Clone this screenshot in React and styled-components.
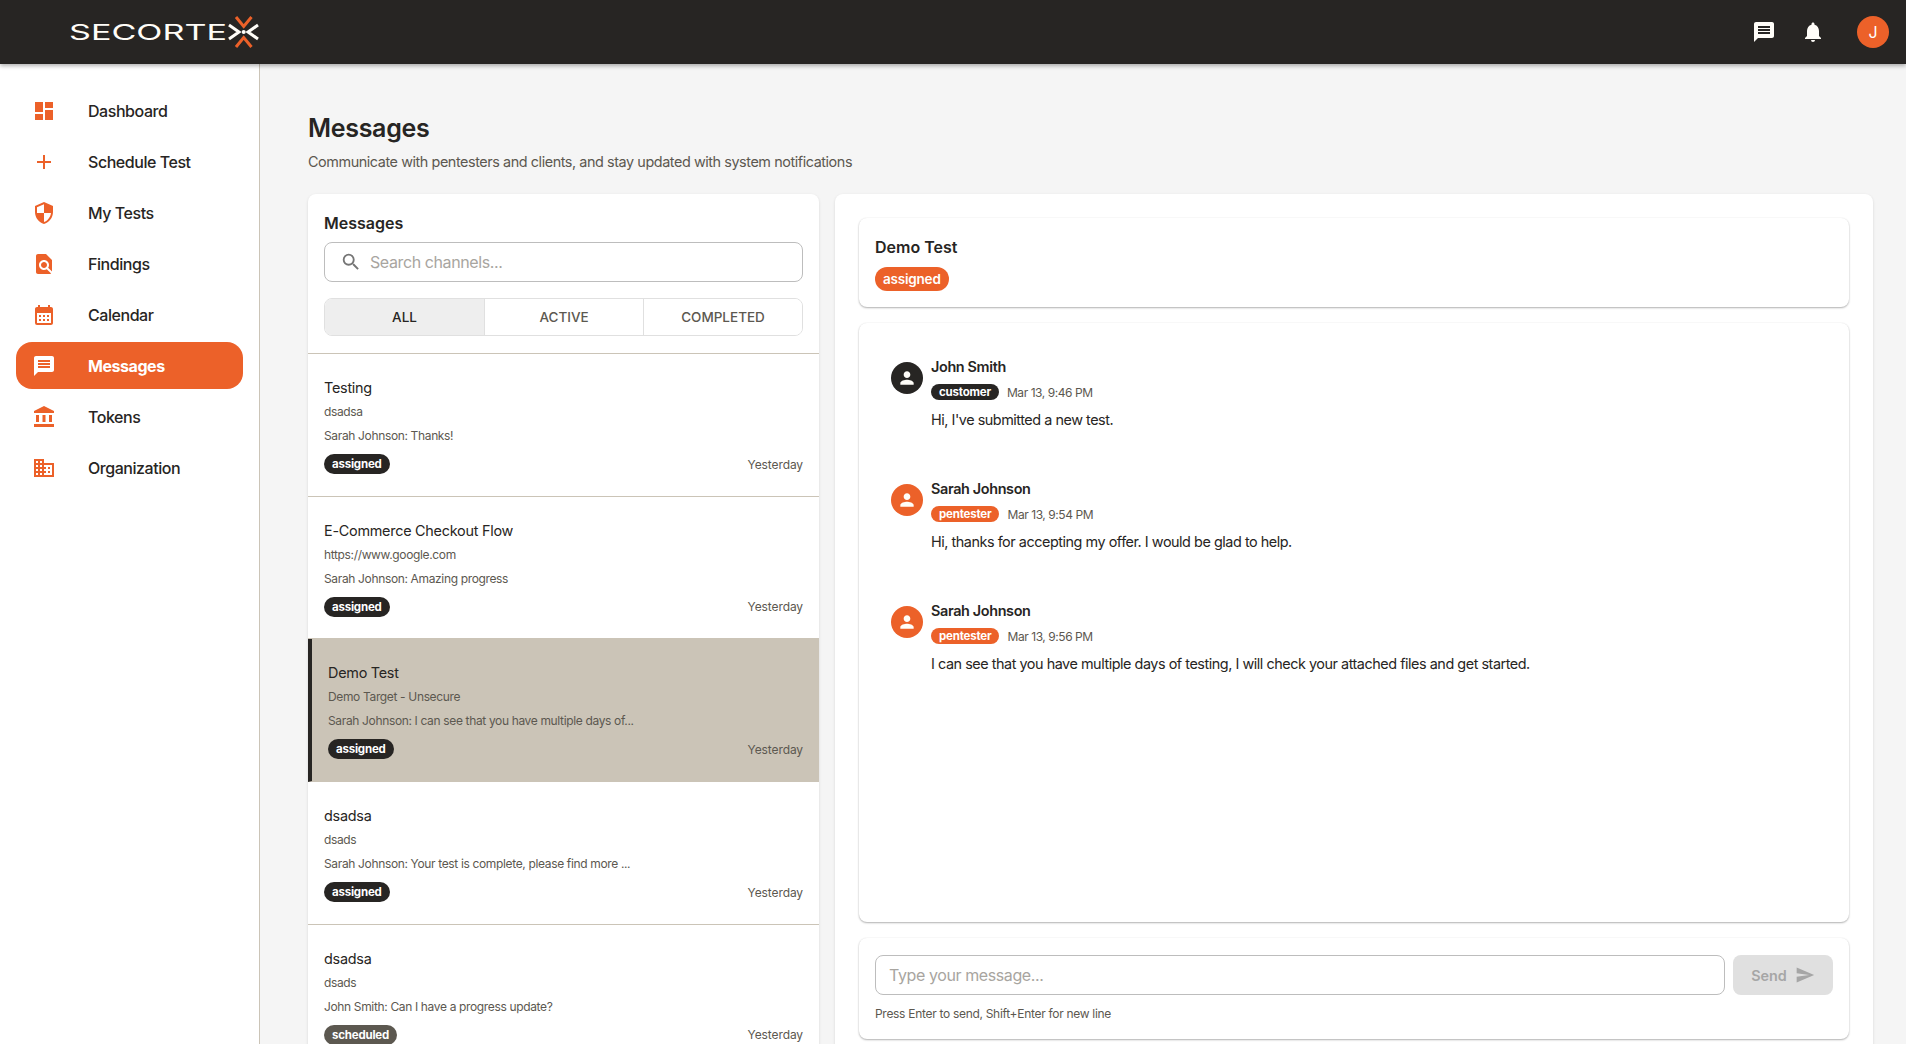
import React from "react";
import styled, { createGlobalStyle } from "styled-components";
import {
  MdDashboard,
  MdAdd,
  MdSecurity,
  MdFindInPage,
  MdCalendarMonth,
  MdMessage,
  MdAccountBalance,
  MdDomain,
  MdNotifications,
  MdPerson,
  MdSearch,
  MdSend,
} from "react-icons/md";

const ORANGE = "#ec6129";
const DARK = "#272523";

const GlobalStyle = createGlobalStyle`
  html, body {
    margin: 0;
    height: 100%;
    overflow: hidden;
    background: #f5f5f5;
    font-family: "Inter", "Liberation Sans", sans-serif;
    color: ${DARK};
  }
  * { box-sizing: border-box; }
`;

const navItems = [
  { label: "Dashboard", icon: MdDashboard },
  { label: "Schedule Test", icon: MdAdd },
  { label: "My Tests", icon: MdSecurity },
  { label: "Findings", icon: MdFindInPage },
  { label: "Calendar", icon: MdCalendarMonth },
  { label: "Messages", icon: MdMessage, active: true },
  { label: "Tokens", icon: MdAccountBalance },
  { label: "Organization", icon: MdDomain },
];

const channels = [
  { title: "Testing", target: "dsadsa", preview: "Sarah Johnson: Thanks!", status: "assigned" },
  { title: "E-Commerce Checkout Flow", target: "https://www.google.com", preview: "Sarah Johnson: Amazing progress", status: "assigned" },
  { title: "Demo Test", target: "Demo Target - Unsecure", preview: "Sarah Johnson: I can see that you have multiple days of...", status: "assigned", selected: true },
  { title: "dsadsa", target: "dsads", preview: "Sarah Johnson: Your test is complete, please find more ...", status: "assigned" },
  { title: "dsadsa", target: "dsads", preview: "John Smith: Can I have a progress update?", status: "scheduled" },
];

const thread = [
  { name: "John Smith", role: "customer", date: "Mar 13, 9:46 PM", text: "Hi, I've submitted a new test." },
  { name: "Sarah Johnson", role: "pentester", date: "Mar 13, 9:54 PM", text: "Hi, thanks for accepting my offer. I would be glad to help." },
  { name: "Sarah Johnson", role: "pentester", date: "Mar 13, 9:56 PM", text: "I can see that you have multiple days of testing, I will check your attached files and get started." },
];

const Page = styled.div`
  height: 100vh;
  display: flex;
  flex-direction: column;
  overflow: hidden;
`;

const TopBar = styled.header`
  height: 64px;
  flex: none;
  background: ${DARK};
  display: flex;
  align-items: center;
  justify-content: space-between;
  padding: 0 17px 0 68px;
  box-shadow: 0 2px 4px rgba(0, 0, 0, 0.3);
  position: relative;
  z-index: 2;
`;

const TopActions = styled.div`
  display: flex;
  align-items: center;
`;

const TopIcon = styled.div`
  width: 24px;
  height: 24px;
  margin-right: 25px;
  color: #fffdf8;
  font-size: 24px;
  display: flex;
`;

const UserBadge = styled.div`
  width: 32px;
  height: 32px;
  margin-left: 7px;
  border-radius: 50%;
  background: ${ORANGE};
  color: #fff;
  font-size: 16px;
  display: flex;
  align-items: center;
  justify-content: center;
`;

const Body = styled.div`
  flex: 1;
  display: flex;
  min-height: 0;
`;

const SideBar = styled.nav`
  width: 260px;
  flex: none;
  background: #fff;
  border-right: 1px solid #cbc4b7;
  padding: 23px 16px 0;
  display: flex;
  flex-direction: column;
  gap: 4px;
`;

const NavItem = styled.div`
  height: 47px;
  display: flex;
  align-items: center;
  padding-left: 16px;
  border-radius: 16px;
  font-size: 16px;
  letter-spacing: -0.45px;
  font-weight: ${(p) => (p.$active ? 700 : 500)};
  background: ${(p) => (p.$active ? ORANGE : "transparent")};
  color: ${(p) => (p.$active ? "#fff" : DARK)};
  svg {
    flex: none;
    margin-right: 32px;
    font-size: 24px;
    color: ${(p) => (p.$active ? "#fff" : ORANGE)};
  }
`;

const Main = styled.main`
  flex: 1;
  min-width: 0;
  padding: 48px 33px 0 48px;
`;

const PageTitle = styled.h1`
  margin: 0;
  font-size: 25px;
  line-height: 32px;
  font-weight: 600;
  letter-spacing: -0.3px;
`;

const PageSub = styled.p`
  margin: 7px 0 0;
  font-size: 14.4px;
  line-height: 22px;
  letter-spacing: -0.43px;
  color: #5c5850;
`;

const Columns = styled.div`
  margin-top: 21px;
  display: flex;
  gap: 16px;
  height: 869px;
`;

const Card = styled.section`
  background: #fff;
  border-radius: 8px;
  box-shadow: 0 1px 3px rgba(0, 0, 0, 0.12);
  overflow: hidden;
`;

const ListCard = styled(Card)`
  width: 511px;
  flex: none;
`;

const ListHead = styled.div`
  padding: 17px 16px 17px;
  border-bottom: 1px solid #cbc4b7;
`;

const ListTitle = styled.h2`
  margin: 0 0 6px;
  font-size: 16px;
  line-height: 25px;
  font-weight: 600;
  letter-spacing: 0;
`;

const SearchBox = styled.div`
  height: 40px;
  border: 1px solid #bdbdbd;
  border-radius: 8px;
  display: flex;
  align-items: center;
  padding: 0 15px;
  gap: 8px;
  font-size: 16px;
  letter-spacing: -0.4px;
  color: #a8a5a0;
  svg {
    font-size: 22px;
    color: #757575;
  }
`;

const Tabs = styled.div`
  margin-top: 16px;
  height: 38px;
  display: grid;
  grid-template-columns: repeat(3, 1fr);
  border: 1px solid #e0e0e0;
  border-radius: 8px;
  overflow: hidden;
`;

const Tab = styled.div`
  display: flex;
  align-items: center;
  justify-content: center;
  font-size: 13.5px;
  font-weight: 500;
  color: ${(p) => (p.$active ? DARK : "#5c5850")};
  background: ${(p) => (p.$active ? "#eeeeee" : "#fff")};
  & + & {
    border-left: 1px solid #e0e0e0;
  }
`;

const Channel = styled.div`
  height: 142.7px;
  padding: 23px 16px 0;
  background: ${(p) => (p.$selected ? "#cbc4b7" : "#fff")};
  border-bottom: 1px solid #cbc4b7;
  border-left: ${(p) => (p.$selected ? `4px solid ${DARK}` : "none")};
`;

const ChannelTitle = styled.div`
  font-size: 14.4px;
  line-height: 22px;
  letter-spacing: -0.25px;
`;

const ChannelSub = styled.div`
  margin-top: 2px;
  font-size: 12px;
  line-height: 21px;
  letter-spacing: -0.35px;
  color: #5c5850;
`;

const ChannelPreview = styled(ChannelSub)`
  margin-top: 3px;
`;

const ChannelFoot = styled.div`
  margin-top: 8px;
  display: flex;
  align-items: center;
  justify-content: space-between;
`;

const Chip = styled.span`
  display: inline-flex;
  align-items: center;
  height: ${(p) => (p.$small ? "16px" : "20px")};
  padding: 0 8px;
  border-radius: 10px;
  font-size: 11.5px;
  font-weight: 700;
  letter-spacing: -0.2px;
  color: #fff;
  background: ${(p) => p.$bg};
`;

const Stamp = styled.span`
  font-size: 12px;
  letter-spacing: -0.1px;
  color: #5c5850;
`;

const DateStamp = styled(Stamp)`
  letter-spacing: -0.44px;
`;

const ChatCard = styled(Card)`
  flex: 1;
  min-width: 0;
  padding: 24px;
  display: flex;
  flex-direction: column;
  gap: 16px;
`;

const InnerCard = styled.div`
  background: #fff;
  border-radius: 8px;
  box-shadow: 0 1px 2px rgba(0, 0, 0, 0.3), 0 0 2px rgba(0, 0, 0, 0.06);
`;

const ChatHead = styled(InnerCard)`
  height: 89px;
  padding: 16px;
  flex: none;
  display: flex;
  flex-direction: column;
  align-items: flex-start;
`;

const ChatTitle = styled.h3`
  margin: 0 0 7px;
  font-size: 16px;
  line-height: 26px;
  font-weight: 600;
  letter-spacing: 0;
`;

const LargeChip = styled(Chip)`
  height: 24px;
  border-radius: 12px;
  font-size: 13.5px;
  font-weight: 600;
`;

const Thread = styled(InnerCard)`
  flex: 1;
  min-height: 0;
  padding: 33px 32px 0;
  display: flex;
  flex-direction: column;
  gap: 38px;
`;

const MessageRow = styled.div`
  display: flex;
  gap: 8px;
  height: 84px;
`;

const Avatar = styled.div`
  width: 32px;
  height: 32px;
  margin-top: 6px;
  flex: none;
  border-radius: 50%;
  background: ${(p) => p.$bg};
  color: #fffdf8;
  display: flex;
  align-items: center;
  justify-content: center;
  font-size: 20px;
`;

const SenderName = styled.div`
  font-size: 14.4px;
  line-height: 22px;
  font-weight: 600;
  letter-spacing: -0.35px;
`;

const SenderMeta = styled.div`
  margin-top: 6px;
  display: flex;
  align-items: center;
  gap: 8px;
`;

const MessageText = styled.p`
  margin: 9px 0 0;
  font-size: 14.4px;
  line-height: 22px;
  letter-spacing: -0.46px;
`;

const Composer = styled(InnerCard)`
  height: 101px;
  flex: none;
  padding: 17px 16px 0;
`;

const ComposerRow = styled.div`
  display: flex;
  gap: 8px;
`;

const MessageInput = styled.div`
  flex: 1;
  height: 40px;
  border: 1px solid #bdbdbd;
  border-radius: 8px;
  display: flex;
  align-items: center;
  padding: 0 13px;
  font-size: 16px;
  letter-spacing: -0.4px;
  color: #a8a5a0;
`;

const SendButton = styled.div`
  width: 100px;
  height: 40px;
  flex: none;
  border-radius: 8px;
  background: #e0e0e0;
  color: #a6a6a6;
  display: flex;
  align-items: center;
  justify-content: center;
  gap: 8px;
  font-size: 14.4px;
  font-weight: 600;
  svg {
    font-size: 20px;
  }
`;

const Hint = styled.div`
  margin-top: 9px;
  font-size: 12px;
  line-height: 20px;
  letter-spacing: -0.3px;
  color: #5c5850;
`;

const Logo = () => (
  <svg width="192" height="36" viewBox="0 0 192 36" style={{ display: "block" }}>
    <text
      x="1"
      y="26"
      fontFamily="Inter, sans-serif"
      fontSize="22"
      fontWeight="400"
      fill="#fffdf8"
      textLength="158"
      lengthAdjust="spacingAndGlyphs"
    >
      SECORTE
    </text>
    <g fill="none" strokeWidth="3">
      <path d="M161 11l10 7-10 7M190 11l-10 7 10 7" stroke="#fffdf8" />
      <path d="M168 3l7.7 9.5L183.5 3M168 33l7.7-9.5 7.8 9.5" stroke={ORANGE} />
    </g>
    <circle cx="175.7" cy="18" r="2" fill="#fffdf8" />
  </svg>
);

export default function App() {
  return (
    <Page>
      <GlobalStyle />
      <TopBar>
        <Logo />
        <TopActions>
          <TopIcon>
            <MdMessage />
          </TopIcon>
          <TopIcon>
            <MdNotifications />
          </TopIcon>
          <UserBadge>J</UserBadge>
        </TopActions>
      </TopBar>
      <Body>
        <SideBar>
          {navItems.map((item) => (
            <NavItem key={item.label} $active={item.active}>
              <item.icon />
              {item.label}
            </NavItem>
          ))}
        </SideBar>
        <Main>
          <PageTitle>Messages</PageTitle>
          <PageSub>
            Communicate with pentesters and clients, and stay updated with system notifications
          </PageSub>
          <Columns>
            <ListCard>
              <ListHead>
                <ListTitle>Messages</ListTitle>
                <SearchBox>
                  <MdSearch />
                  Search channels...
                </SearchBox>
                <Tabs>
                  <Tab $active>ALL</Tab>
                  <Tab>ACTIVE</Tab>
                  <Tab>COMPLETED</Tab>
                </Tabs>
              </ListHead>
              {channels.map((c, i) => (
                <Channel key={i} $selected={c.selected}>
                  <ChannelTitle>{c.title}</ChannelTitle>
                  <ChannelSub>{c.target}</ChannelSub>
                  <ChannelPreview>{c.preview}</ChannelPreview>
                  <ChannelFoot>
                    <Chip $bg={c.status === "scheduled" ? "#5c5850" : DARK}>{c.status}</Chip>
                    <Stamp>Yesterday</Stamp>
                  </ChannelFoot>
                </Channel>
              ))}
            </ListCard>
            <ChatCard>
              <ChatHead>
                <ChatTitle>Demo Test</ChatTitle>
                <LargeChip $bg={ORANGE}>assigned</LargeChip>
              </ChatHead>
              <Thread>
                {thread.map((m, i) => {
                  const color = m.role === "customer" ? DARK : ORANGE;
                  return (
                    <MessageRow key={i}>
                      <Avatar $bg={color}>
                        <MdPerson />
                      </Avatar>
                      <div>
                        <SenderName>{m.name}</SenderName>
                        <SenderMeta>
                          <Chip $small $bg={color}>{m.role}</Chip>
                          <DateStamp>{m.date}</DateStamp>
                        </SenderMeta>
                        <MessageText>{m.text}</MessageText>
                      </div>
                    </MessageRow>
                  );
                })}
              </Thread>
              <Composer>
                <ComposerRow>
                  <MessageInput>Type your message...</MessageInput>
                  <SendButton>
                    Send
                    <MdSend />
                  </SendButton>
                </ComposerRow>
                <Hint>Press Enter to send, Shift+Enter for new line</Hint>
              </Composer>
            </ChatCard>
          </Columns>
        </Main>
      </Body>
    </Page>
  );
}
